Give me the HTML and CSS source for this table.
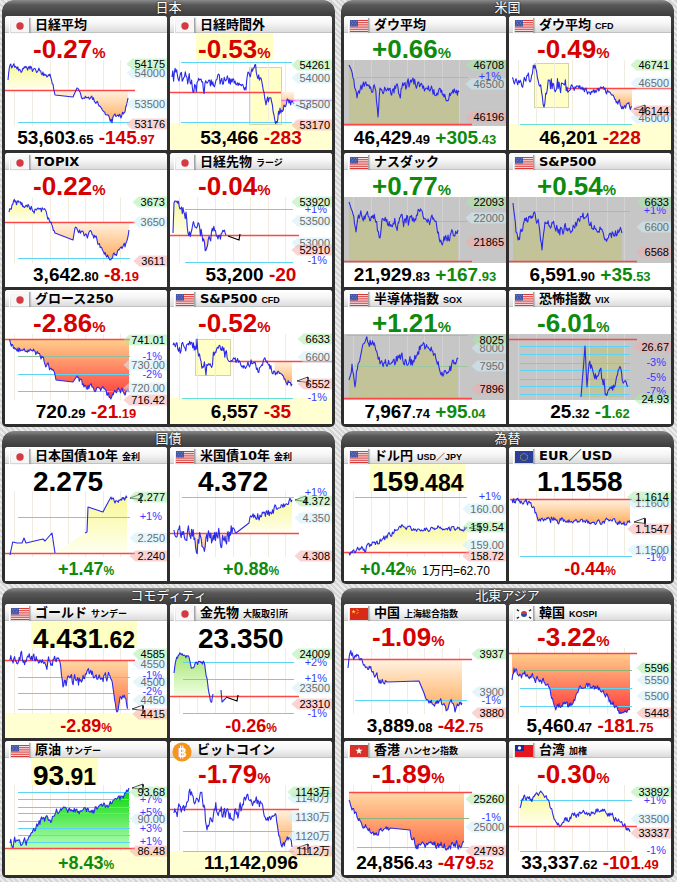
FILE: index.html
```html
<!DOCTYPE html>
<html lang="ja">
<head>
<meta charset="utf-8">
<title>マーケット</title>
<link rel="stylesheet" href="styles.css">
</head>
<body>
<svg class="defs" aria-hidden="true">
  <symbol id="f-jp" viewBox="0 0 18 12"><rect width="18" height="12" fill="#f6f6f6"/><circle cx="9" cy="6" r="3.7" fill="#d43a44"/></symbol>
  <symbol id="f-us" viewBox="0 0 18 12"><rect width="18" height="12" fill="#fff"/><g fill="#d52b2b"><rect y="0" width="18" height="0.93"/><rect y="1.85" width="18" height="0.93"/><rect y="3.7" width="18" height="0.93"/><rect y="5.55" width="18" height="0.93"/><rect y="7.4" width="18" height="0.93"/><rect y="9.25" width="18" height="0.93"/><rect y="11.07" width="18" height="0.93"/></g><rect width="8" height="6.5" fill="#4656a6"/><g fill="#aab4e0"><circle cx="1.5" cy="1.3" r=".45"/><circle cx="4" cy="1.3" r=".45"/><circle cx="6.5" cy="1.3" r=".45"/><circle cx="2.7" cy="3.2" r=".45"/><circle cx="5.3" cy="3.2" r=".45"/><circle cx="1.5" cy="5.1" r=".45"/><circle cx="4" cy="5.1" r=".45"/><circle cx="6.5" cy="5.1" r=".45"/></g></symbol>
  <symbol id="f-eu" viewBox="0 0 18 12"><rect width="18" height="12" fill="#2b3f96"/><g fill="#e8d030"><circle cx="9" cy="2.4" r=".5"/><circle cx="10.8" cy="2.9" r=".5"/><circle cx="12.1" cy="4.2" r=".5"/><circle cx="12.6" cy="6" r=".5"/><circle cx="12.1" cy="7.8" r=".5"/><circle cx="10.8" cy="9.1" r=".5"/><circle cx="9" cy="9.6" r=".5"/><circle cx="7.2" cy="9.1" r=".5"/><circle cx="5.9" cy="7.8" r=".5"/><circle cx="5.4" cy="6" r=".5"/><circle cx="5.9" cy="4.2" r=".5"/><circle cx="7.2" cy="2.9" r=".5"/></g></symbol>
  <symbol id="f-cn" viewBox="0 0 18 12"><rect width="18" height="12" fill="#d82a18"/><polygon points="3.6,1.4 4.2,3 5.9,3 4.5,4 5,5.6 3.6,4.6 2.2,5.6 2.7,4 1.3,3 3,3" fill="#f8d800"/><g fill="#f8d800"><circle cx="7" cy="1.3" r=".5"/><circle cx="8" cy="2.6" r=".5"/><circle cx="8" cy="4.2" r=".5"/><circle cx="7" cy="5.4" r=".5"/></g></symbol>
  <symbol id="f-kr" viewBox="0 0 18 12"><rect width="18" height="12" fill="#fafafa"/><path d="M6,6 a3,3 0 0 1 6,0 z" fill="#d8303c"/><path d="M6,6 a3,3 0 0 0 6,0 z" fill="#2a4aa0"/><g fill="#222"><rect x="1.6" y="1.6" width="2.6" height="1.4" transform="rotate(35 2.9 2.3)"/><rect x="13.8" y="1.6" width="2.6" height="1.4" transform="rotate(-35 15.1 2.3)"/><rect x="1.6" y="9" width="2.6" height="1.4" transform="rotate(-35 2.9 9.7)"/><rect x="13.8" y="9" width="2.6" height="1.4" transform="rotate(35 15.1 9.7)"/></g></symbol>
  <symbol id="f-hk" viewBox="0 0 18 12"><rect width="18" height="12" fill="#d8302a"/><polygon points="9,2.2 9.9,4.8 12.6,4.8 10.4,6.4 11.2,9 9,7.4 6.8,9 7.6,6.4 5.4,4.8 8.1,4.8" fill="#fff"/></symbol>
  <symbol id="f-tw" viewBox="0 0 18 12"><rect width="18" height="12" fill="#e8141c"/><rect width="9" height="6" fill="#1a2a9a"/><circle cx="4.5" cy="3" r="1.7" fill="#fff"/></symbol>
</svg>

<div class="board">

  <section class="sec">
    <div class="sec-h">日本</div>
    <div class="cards">
      <div class="card">
        <div class="ttl"><span class="flag"><svg><use href="#f-jp"/></svg></span><span class="name">日経平均</span></div>
        <div class="pct"><span class="big dn">-0.27<small>%</small></span></div>
        <svg class="chart" data-k="n225"></svg>
        <div class="val">53,603<small>.65</small> <span class="dn">-145<small>.97</small></span></div>
      </div>
      <div class="card">
        <div class="ttl"><span class="flag"><svg><use href="#f-jp"/></svg></span><span class="name">日経時間外</span></div>
        <div class="pct"><span class="big dn hl">-0.53<small>%</small></span></div>
        <svg class="chart" data-k="nkx"></svg>
        <div class="val night">53,466 <span class="dn">-283</span></div>
      </div>
      <div class="card">
        <div class="ttl"><span class="flag"><svg><use href="#f-jp"/></svg></span><span class="name">TOPIX</span></div>
        <div class="pct"><span class="big dn">-0.22<small>%</small></span></div>
        <svg class="chart" data-k="topix"></svg>
        <div class="val">3,642<small>.80</small> <span class="dn">-8<small>.19</small></span></div>
      </div>
      <div class="card">
        <div class="ttl"><span class="flag"><svg><use href="#f-jp"/></svg></span><span class="name">日経先物<span class="sub">ラージ</span></span></div>
        <div class="pct"><span class="big dn">-0.04<small>%</small></span></div>
        <svg class="chart" data-k="nkf"></svg>
        <div class="val">53,200 <span class="dn">-20</span></div>
      </div>
      <div class="card">
        <div class="ttl"><span class="flag"><svg><use href="#f-jp"/></svg></span><span class="name">グロース250</span></div>
        <div class="pct"><span class="big dn">-2.86<small>%</small></span></div>
        <svg class="chart" data-k="growth"></svg>
        <div class="val">720<small>.29</small> <span class="dn">-21<small>.19</small></span></div>
      </div>
      <div class="card">
        <div class="ttl"><span class="flag"><svg><use href="#f-us"/></svg></span><span class="name">S&amp;P500<span class="sub">CFD</span></span></div>
        <div class="pct"><span class="big dn">-0.52<small>%</small></span></div>
        <svg class="chart" data-k="spcfd"></svg>
        <div class="val night">6,557 <span class="dn">-35</span></div>
      </div>
    </div>
  </section>

  <section class="sec">
    <div class="sec-h">米国</div>
    <div class="cards">
      <div class="card">
        <div class="ttl"><span class="flag"><svg><use href="#f-us"/></svg></span><span class="name">ダウ平均</span></div>
        <div class="pct"><span class="big up">+0.66<small>%</small></span></div>
        <svg class="chart" data-k="dow"></svg>
        <div class="val">46,429<small>.49</small> <span class="up">+305<small>.43</small></span></div>
      </div>
      <div class="card">
        <div class="ttl"><span class="flag"><svg><use href="#f-us"/></svg></span><span class="name">ダウ平均<span class="sub">CFD</span></span></div>
        <div class="pct"><span class="big dn">-0.49<small>%</small></span></div>
        <svg class="chart" data-k="dowcfd"></svg>
        <div class="val night">46,201 <span class="dn">-228</span></div>
      </div>
      <div class="card">
        <div class="ttl"><span class="flag"><svg><use href="#f-us"/></svg></span><span class="name">ナスダック</span></div>
        <div class="pct"><span class="big up">+0.77<small>%</small></span></div>
        <svg class="chart" data-k="nasdaq"></svg>
        <div class="val">21,929<small>.83</small> <span class="up">+167<small>.93</small></span></div>
      </div>
      <div class="card">
        <div class="ttl"><span class="flag"><svg><use href="#f-us"/></svg></span><span class="name">S&amp;P500</span></div>
        <div class="pct"><span class="big up">+0.54<small>%</small></span></div>
        <svg class="chart" data-k="sp"></svg>
        <div class="val">6,591<small>.90</small> <span class="up">+35<small>.53</small></span></div>
      </div>
      <div class="card">
        <div class="ttl"><span class="flag"><svg><use href="#f-us"/></svg></span><span class="name">半導体指数<span class="sub">SOX</span></span></div>
        <div class="pct"><span class="big up">+1.21<small>%</small></span></div>
        <svg class="chart" data-k="sox"></svg>
        <div class="val">7,967<small>.74</small> <span class="up">+95<small>.04</small></span></div>
      </div>
      <div class="card">
        <div class="ttl"><span class="flag"><svg><use href="#f-us"/></svg></span><span class="name">恐怖指数<span class="sub">VIX</span></span></div>
        <div class="pct"><span class="big up">-6.01<small>%</small></span></div>
        <svg class="chart" data-k="vix"></svg>
        <div class="val">25<small>.32</small> <span class="up">-1<small>.62</small></span></div>
      </div>
    </div>
  </section>

  <section class="sec">
    <div class="sec-h">国債</div>
    <div class="cards">
      <div class="card">
        <div class="ttl"><span class="flag"><svg><use href="#f-jp"/></svg></span><span class="name">日本国債10年<span class="sub">金利</span></span></div>
        <div class="pct num"><span class="big">2.275</span></div>
        <svg class="chart" data-k="jgb"></svg>
        <div class="val pc"><span class="up">+1.47<small>%</small></span></div>
      </div>
      <div class="card">
        <div class="ttl"><span class="flag"><svg><use href="#f-us"/></svg></span><span class="name">米国債10年<span class="sub">金利</span></span></div>
        <div class="pct num"><span class="big">4.372</span></div>
        <svg class="chart" data-k="ust"></svg>
        <div class="val pc"><span class="up">+0.88<small>%</small></span></div>
      </div>
    </div>
  </section>

  <section class="sec">
    <div class="sec-h">為替</div>
    <div class="cards">
      <div class="card">
        <div class="ttl"><span class="flag"><svg><use href="#f-us"/></svg></span><span class="name">ドル円<span class="sub">USD／JPY</span></span></div>
        <div class="pct num"><span class="big hl">159<small>.484</small></span></div>
        <svg class="chart" data-k="usdjpy"></svg>
        <div class="val pc"><span class="up">+0.42<small>%</small></span><span class="fxr">1万円=62.70</span></div>
      </div>
      <div class="card">
        <div class="ttl"><span class="flag"><svg><use href="#f-eu"/></svg></span><span class="name">EUR／USD</span></div>
        <div class="pct num"><span class="big">1.1558</span></div>
        <svg class="chart" data-k="eurusd"></svg>
        <div class="val pc"><span class="dn">-0.44<small>%</small></span></div>
      </div>
    </div>
  </section>

  <section class="sec">
    <div class="sec-h">コモディティ</div>
    <div class="cards">
      <div class="card">
        <div class="ttl"><span class="flag"><svg><use href="#f-us"/></svg></span><span class="name">ゴールド<span class="sub">サンデー</span></span></div>
        <div class="pct num"><span class="big hl">4,431<small>.62</small></span></div>
        <svg class="chart" data-k="gold"></svg>
        <div class="val pc night"><span class="dn">-2.89<small>%</small></span></div>
      </div>
      <div class="card">
        <div class="ttl"><span class="flag"><svg><use href="#f-jp"/></svg></span><span class="name">金先物<span class="sub">大阪取引所</span></span></div>
        <div class="pct num"><span class="big">23,350</span></div>
        <svg class="chart" data-k="goldf"></svg>
        <div class="val pc"><span class="dn">-0.26<small>%</small></span></div>
      </div>
      <div class="card">
        <div class="ttl"><span class="flag"><svg><use href="#f-us"/></svg></span><span class="name">原油<span class="sub">サンデー</span></span></div>
        <div class="pct num"><span class="big hl">93<small>.91</small></span></div>
        <svg class="chart" data-k="oil"></svg>
        <div class="val pc night"><span class="up">+8.43<small>%</small></span></div>
      </div>
      <div class="card">
        <div class="ttl"><span class="flag btc"><svg viewBox="0 0 20 20"><circle cx="10" cy="10" r="9.6" fill="#f4951e"/><line x1="8.6" y1="3.6" x2="8.6" y2="16.4" stroke="#fff" stroke-width="1.1"/><line x1="10.8" y1="3.6" x2="10.8" y2="16.4" stroke="#fff" stroke-width="1.1"/><text x="10.4" y="14.6" class="btc-t">B</text></svg></span><span class="name">ビットコイン</span></div>
        <div class="pct"><span class="big dn">-1.79<small>%</small></span></div>
        <svg class="chart" data-k="btc"></svg>
        <div class="val night">11,142,096</div>
      </div>
    </div>
  </section>

  <section class="sec">
    <div class="sec-h">北東アジア</div>
    <div class="cards">
      <div class="card">
        <div class="ttl"><span class="flag"><svg><use href="#f-cn"/></svg></span><span class="name">中国<span class="sub">上海総合指数</span></span></div>
        <div class="pct"><span class="big dn">-1.09<small>%</small></span></div>
        <svg class="chart" data-k="china"></svg>
        <div class="val">3,889<small>.08</small> <span class="dn">-42<small>.75</small></span></div>
      </div>
      <div class="card">
        <div class="ttl"><span class="flag"><svg><use href="#f-kr"/></svg></span><span class="name">韓国<span class="sub">KOSPI</span></span></div>
        <div class="pct"><span class="big dn">-3.22<small>%</small></span></div>
        <svg class="chart" data-k="korea"></svg>
        <div class="val">5,460<small>.47</small> <span class="dn">-181<small>.75</small></span></div>
      </div>
      <div class="card">
        <div class="ttl"><span class="flag"><svg><use href="#f-hk"/></svg></span><span class="name">香港<span class="sub">ハンセン指数</span></span></div>
        <div class="pct"><span class="big dn">-1.89<small>%</small></span></div>
        <svg class="chart" data-k="hk"></svg>
        <div class="val">24,856<small>.43</small> <span class="dn">-479<small>.52</small></span></div>
      </div>
      <div class="card">
        <div class="ttl"><span class="flag"><svg><use href="#f-tw"/></svg></span><span class="name">台湾<span class="sub">加権</span></span></div>
        <div class="pct"><span class="big dn">-0.30<small>%</small></span></div>
        <svg class="chart" data-k="tw"></svg>
        <div class="val">33,337<small>.62</small> <span class="dn">-101<small>.49</small></span></div>
      </div>
    </div>
  </section>

</div>
<script src="app.js"></script>
</body>
</html>
```

FILE: styles.css
```css
* { box-sizing: border-box; margin: 0; padding: 0; }
html, body { width: 677px; height: 882px; overflow: hidden; }
body {
  background: repeating-linear-gradient(45deg, #d5d5d5 0 2px, #ebebeb 2px 4px);
  font-family: "Liberation Sans", "Noto Sans CJK JP", sans-serif;
  color: #000;
}
.defs { display: block; width: 0; height: 0; overflow: hidden; }

.board {
  display: grid;
  grid-template-columns: 333px 333px;
  column-gap: 6px;
  row-gap: 4px;
  padding-left: 2px;
  align-items: start;
}
.sec {
  background: linear-gradient(#8a8a8a 0, #585858 5px, #3e3e3e 15px, #2f2f2f 40px, #2d2d2d 100%);
  border-radius: 12px 12px 5px 5px;
  padding: 0 3px 3px;
}
.sec-h {
  height: 16px;
  line-height: 16px;
  text-align: center;
  color: #fff;
  font-family: "DejaVu Sans", "Noto Sans CJK JP", sans-serif;
  font-size: 13px;
  text-shadow: 0 0 2px #000;
}
.cards { display: grid; grid-template-columns: 1fr 1fr; gap: 3px; }
.card {
  background: #fff;
  height: 134px;
  border-radius: 3px 3px 0 0;
  overflow: hidden;
}

.ttl {
  height: 17px;
  display: flex;
  align-items: flex-start;
  background: linear-gradient(#ffffff 0%, #f6f6f6 45%, #dcdcdc 100%);
  border-bottom: 1px solid #c2c2c2;
}
.flag {
  flex: none;
  width: 21px;
  height: 15px;
  margin: 2px 0 0 4px;
  display: flex;
  align-items: center;
  justify-content: center;
  background: linear-gradient(#fdfdfd, #d6d6d6);
  border-left: 1px solid #fff;
  border-right: 1px solid #a4a4a4;
  box-shadow: 1px 0 1px rgba(0,0,0,.18);
}
.flag svg { width: 18px; height: 12px; display: block; }
.flag.btc {
  width: 20px; height: 20px; margin: 1px 0 0 2px;
  background: none; border: none; box-shadow: none;
  position: relative; z-index: 2;
}
.flag.btc svg { width: 20px; height: 20px; }
.btc-t { font: bold 12px "Liberation Sans", sans-serif; fill: #fff; text-anchor: middle; }
.name {
  margin-left: 5px;
  font-family: "DejaVu Sans", "Noto Sans CJK JP", sans-serif;
  font-weight: bold;
  font-size: 13px;
  line-height: 17px;
  white-space: nowrap;
}
.sub {
  margin-left: 4px;
  font-family: "Liberation Sans", "Noto Sans CJK JP", sans-serif;
  font-size: 9px;
  font-weight: bold;
}

.pct { height: 27px; padding-left: 26px; display: flex; align-items: flex-start; }
.big {
  display: inline-block;
  height: 27px;
  padding: 0 2px;
  font-weight: bold;
  font-size: 26px;
  line-height: 33px;
  white-space: nowrap;
}
.big small { font-size: 15px; line-height: 1; }
.num .big { font-size: 28px; line-height: 36px; }
.num .big small { font-size: 23px; }
.hl { background: #ffffc4; }

.chart {
  display: block;
  width: 162px;
  height: 66px;
  overflow: visible;
  position: relative;
  z-index: 1;
}
.chart text { font-family: "Liberation Sans", "Noto Sans CJK JP", sans-serif; font-size: 11px; }
.lb-h, .lb-l { fill: #000; }
.lb-m { fill: #6c6c6c; }
.lb-p { fill: #3a3aff; }
.lbx-h { fill: #a4eca4; fill-opacity: .5; }
.lbx-l { fill: #f6a8a8; fill-opacity: .5; }
.lbx-m { fill: #cdeff9; fill-opacity: .55; }

.val {
  height: 24px;
  line-height: 24px;
  text-align: center;
  font-weight: bold;
  font-size: 19px;
  white-space: nowrap;
}
.val small { font-size: 13px; line-height: 1; }
.val.pc { font-size: 18px; }
.val.pc small { font-size: 12px; }
.fxr { font-weight: normal; font-size: 12px; margin-left: 6px; color: #000; }
.night { background: #ffffd2; }
.up { color: #0e8a0e; }
.dn { color: #d60000; }
```

FILE: app.js
```js
(function () {
  var NS = 'http://www.w3.org/2000/svg';
  var W = 162, H = 66;
  var GRID = [9, 27, 45, 63, 80, 98, 115];
  var FILL = {
    y: ['#f8f894', '#fffff0'],
    ol: ['#c3c39a', '#c3c39a'],
    G: ['#00d400', '#b4ffb4'],
    lg: ['#a2e470', '#f0ffe2'],
    o: ['#fff3e2', '#ffaa58'],
    r: ['#ffcf8c', '#ff3a3a'],
    or: ['#ffd9a4', '#ff6e42']
  };
  var C = {
    n225: { base: 30, rx: [0, 130], cy: [[62, 13, 125]], up: 'y', dn: 'o',
      pts: [[3,20,1.5],[5,5,2],[12,9,2],[25,9,2],[38,12,2],[45,14,2],[48,24,1.5],[50,35,0],[68,37,0],[72,28,1.5],[78,38,1.5],[86,37,1.5],[95,46,1.5],[102,55,2],[107,63,2],[110,54,2],[116,58,2],[120,52,1.5],[123,38,0]],
      lab: [[13,'54000','m'],[44,'53500','m'],[4,'54175','h'],[64,'53176','l']] },
    nkx: { base: 32, rx: [0, 111], cy: [[2, 11, 122], [62, 11, 122]], mag: [40, 111, 162], box: [79, 7, 32, 57], band: 63, fx: 111, dn: 'o',
      pts: [[2,17,5],[20,22,5],[42,25,4],[55,20,3],[62,22,2],[76,30,2],[78,12,3],[84,8,3],[91,18,2],[94,32,3],[96,45,3],[100,38,3],[104,55,3],[107,63,3],[110,48,3],[114,45,3],[119,43,3],[124,44,0]],
      mk: ['z', 126, 45],
      lab: [[18,'54000','m'],[44,'53500','m'],[5,'54261','h'],[65,'53170','l']] },
    topix: { base: 25, rx: [0, 130], cy: [[61, 13, 125]], up: 'y', dn: 'o',
      pts: [[4,15,2],[10,5,2],[20,10,2],[30,12,2],[38,12,2],[46,25,1.5],[50,36,0],[68,43,0],[70,31,1.5],[80,38,2],[88,38,2],[96,50,2],[105,63,2],[114,53,2],[120,50,1.5],[124,33,0]],
      lab: [[25,'3650','m'],[5,'3673','h'],[64,'3611','l']] },
    nkf: { base: 38, rx: [0, 129], cy: [[12, 15, 123], [65, 15, 123]], up: 'y', dn: 'o',
      pts: [[3,36,0],[4,6,3],[10,12,4],[16,15,3],[18,36,4],[25,30,5],[32,38,4],[36,53,3],[43,34,3],[48,42,3],[52,36,3],[56,38,0]],
      mk: ['z', 58, 39],
      lab: [[24,'53500','m'],[46,'53000','m'],[12,'+1%','p'],[5,'53920','h'],[53,'52910','l'],[63,'-1%','p']] },
    growth: { base: 5, rx: [0, 125], cy: [[22, 13, 125, '#8cc0a0'], [40, 13, 125], [57, 13, 125]], dn: 'r',
      pts: [[4,6,1.5],[10,15,2],[20,17,2],[30,17,2],[36,25,2],[47,36,2],[51,46,0],[68,48,0],[72,42,2],[79,53,2],[87,53,2],[94,54,2],[105,63,2],[114,56,2],[124,57,0]],
      lab: [[31,'730.00','m'],[54,'720.00','m'],[22,'-1%','p'],[40,'-2%','p'],[6,'741.01','h'],[66,'716.42','l']] },
    spcfd: { base: 27, rx: [60, 162], cy: [[64, 12, 123, '#66e0d0']], box: [25, 5, 35, 36], band: 64, fx: 104, dn: 'o',
      pts: [[3,11,4],[15,14,4],[25,12,4],[27,5,5],[36,41,5],[45,18,5],[58,26,2],[70,28,3],[85,28,2],[88,38,2],[94,25,2],[100,35,2],[107,40,2],[115,45,2],[122,50,0]],
      mk: ['t', 127, 47],
      lab: [[23,'6600','m'],[63,'-1%','p'],[5,'6633','h'],[50,'6552','l']] },
    dow: { bg: 'g', base: 64, rx: [0, 128], cy: [[17, 12, 124]], up: 'ol',
      pts: [[5,5,2],[9,18,3],[13,38,3],[17,25,3],[25,25,3],[31,28,3],[34,57,2],[36,28,3],[50,33,4],[65,27,4],[74,22,3],[82,28,3],[93,33,3],[100,37,3],[108,33,3],[115,32,0]],
      lab: [[24,'46500','m'],[16,'+1%','p'],[5,'46708','h'],[57,'46196','l']] },
    dowcfd: { base: 28, rx: [58, 162], cy: [[64, 11, 123, '#66e0d0']], box: [25, 3, 34, 44], band: 64, fx: 96, dn: 'o',
      pts: [[3,18,3],[12,22,4],[21,22,4],[26,5,4],[30,25,6],[35,47,4],[40,20,6],[50,22,5],[58,27,2],[70,28,2],[80,32,2],[86,30,2],[96,28,2],[105,37,2],[115,47,2],[123,47,0]],
      mk: ['t', 125, 49],
      lab: [[23,'46500','m'],[58,'46000','m'],[5,'46741','h'],[51,'46144','l']] },
    nasdaq: { bg: 'g', base: 64, rx: [0, 128], cy: [[24, 10, 123]], up: 'ol',
      pts: [[5,5,2],[9,17,3],[12,35,3],[16,18,3],[25,20,3],[31,22,3],[36,41,2],[38,22,3],[50,27,4],[62,26,4],[70,25,3],[75,13,3],[84,22,3],[92,24,3],[96,45,3],[104,38,3],[114,33,0]],
      lab: [[21,'22000','m'],[5,'22093','h'],[45,'21865','l']] },
    sp: { bg: 'g', base: 64, rx: [0, 128], cy: [[14, 11, 121]], up: 'ol',
      pts: [[4,6,2],[7,35,3],[9,43,3],[15,25,3],[26,16,3],[30,28,2],[33,53,2],[36,25,3],[50,32,4],[65,30,4],[74,16,3],[82,25,3],[91,30,3],[96,43,3],[104,36,3],[113,36,0]],
      lab: [[30,'6600','m'],[13,'+1%','p'],[5,'6633','h'],[55,'6568','l']] },
    sox: { bg: 'g', base: 64, rx: [0, 128], cy: [[1, 2, 124], [32, 10, 124, '#9cc8a0']], up: 'ol',
      pts: [[5,46,3],[8,30,3],[11,53,3],[14,30,3],[19,10,3],[22,5,3],[31,12,3],[36,30,3],[50,25,4],[62,26,4],[70,28,3],[77,11,3],[88,17,3],[98,38,3],[106,32,3],[114,25,0]],
      lab: [[14,'8000','m'],[32,'7950','m'],[6,'8025','h'],[55,'7896','l']] },
    vix: { bg: 'g', base: 5, rx: [0, 128], cy: [[12,11,121],[20,11,121],[29,11,121],[36,11,121],[45,11,121],[52,11,121],[60,11,121]],
      box: [72, 12, 43, 51], boxc: '#c3c39a',
      pts: [[72,63,0],[74,38,1],[76,12,1],[78,53,1],[80,30,3],[88,42,4],[95,45,3],[97,60,2],[103,52,3],[106,52,2],[110,35,3],[115,48,3],[119,52,0]],
      lab: [[28,'-3%','p'],[43,'-5%','p'],[57,'-7%','p'],[13,'26.67','l'],[65,'24.93','h']] },
    jgb: { base: 62, rx: [0, 130], cy: [[26, 13, 125]], up: 'y',
      pts: [[5,64,0],[7.7,51,0],[12,52,0],[17,52,0],[19,47,0],[21,52,0],[38,48,0],[40,50,0],[47,42,0],[50,62,-1],[80,42,0],[82,41,0],[83,16,0],[98,21,0],[100,17,0],[106,6,1.5],[110,12,1.5],[114,9,1.5],[118,8,1.5],[122,7,0]],
      mk: ['t', 125, 7],
      lab: [[25,'+1%','p'],[47,'2.250','m'],[6,'2.277','h'],[65,'2.240','l']] },
    ust: { base: 42, rx: [0, 129], cy: [[6, 12, 124]], up: 'y', dn: 'o',
      pts: [[4,39,5],[20,45,7],[40,47,7],[55,45,6],[62,42,2],[66,42,0],[79,32,0],[80,26,3],[90,24,3],[100,21,3],[109,17,2],[116,13,2],[122,9,0]],
      mk: ['t', 125, 9],
      lab: [[1,'+1%','p'],[27,'4.350','m'],[10,'4.372','h'],[65,'4.308','l']] },
    usdjpy: { base: 61, rx: [0, 125], cy: [[6, 11, 123]], up: 'y',
      pts: [[5,62,2],[12,60,2],[20,58,2],[33,50,2],[43,47,2],[53,39,2],[60,36,1.5],[75,38,1.5],[90,37,1.5],[105,36,1.5],[112,38,1.5],[116,39,1.5],[123,36,0]],
      mk: ['t', 125, 37],
      lab: [[5,'+1%','p'],[18,'160.00','m'],[54,'159.00','m'],[36,'159.54','h'],[65,'158.72','l']] },
    eurusd: { base: 8, rx: [1, 123], cy: [[65, 11, 123]], dn: 'o',
      pts: [[3,9,2],[12,10,2],[21,12,2],[26,22,2],[30,29,2],[40,27,2.5],[48,29,2],[56,30,1.5],[70,31,1.5],[85,31,1.5],[100,30,1.5],[104,28,1.5],[110,33,1.5],[115,31,1.5],[121,32,0]],
      mk: ['t', 125, 31],
      lab: [[12,'1.1600','m'],[59,'1.1500','m'],[66,'-1%','p'],[6,'1.1614','h'],[38,'1.1547','l']] },
    gold: { base: 12, rx: [0, 130], cy: [[29, 13, 125], [45, 13, 125], [61, 13, 125]], band: 65, dn: 'or',
      pts: [[5,12,3],[15,12,4],[25,10,3],[35,12,4],[45,13,3],[55,14,3],[58,39,3],[65,30,4],[75,33,3],[85,24,3],[95,30,3],[105,28,2],[108,40,2],[112,64,2],[115,49,2],[120,50,2],[123,60,0]],
      mk: ['t', 127, 61],
      lab: [[16,'4550','m'],[34,'4500','m'],[52,'4450','m'],[27,'-1%','p'],[43,'-2%','p'],[6,'4585','h'],[66,'4415','l']] },
    goldf: { base: 48, rx: [0, 129], cy: [[14, 13, 124], [31, 13, 124], [65, 13, 124]], up: 'lg',
      pts: [[4,25,1],[6,12,1.5],[9,7,1.5],[19,9,1.5],[22,20,1.5],[26,14,1.5],[34,14,1.5],[37,30,1.5],[39,45,1.5],[41,54,1.5],[43,46,-1],[51,42,0],[52,54,0],[56,50,0]],
      mk: ['z', 56, 49],
      lab: [[40,'23500','m'],[14,'+2%','p'],[30,'+1%','p'],[6,'24009','h'],[56,'23310','l'],[65,'-1%','p']] },
    oil: { base: 63, rx: [0, 130], cy: [[7,13,125],[14,13,125],[22,13,125],[28,13,125],[36,13,125],[43,13,125],[50,13,125],[57,13,125]], band: 65, up: 'G',
      pts: [[5,58,3],[12,55,3],[18,58,3],[22,55,2],[28,45,3],[38,33,2.5],[45,35,2.5],[58,23,2],[62,25,2],[75,26,2],[88,25,2],[102,20,2],[115,15,2],[120,8,1.5],[124,3,0]],
      mk: ['t', 127, 3],
      lab: [[34,'90.00','m'],[14,'+7%','p'],[27,'+5%','p'],[43,'+3%','p'],[56,'+1%','p'],[7,'93.68','h'],[66,'86.48','l']] },
    btc: { base: 24, rx: [0, 129], cy: [[46, 13, 124], [66, 13, 124, '#66e0d0']], band: 66, fx: 106, dn: 'o',
      pts: [[4,28,4],[12,24,4],[16,22,3],[19,7,4],[28,15,5],[34,20,4],[37,45,3],[45,25,5],[60,28,5],[71,26,3],[74,13,3],[84,16,3],[91,18,3],[96,35,2],[106,30,2],[108,45,2],[112,62,2],[118,55,2],[122,62,0]],
      mk: ['t', 127, 63],
      lab: [[13,'1140万','m'],[32,'1130万','m'],[51,'1120万','m'],[7,'1143万','h'],[66,'1112万','l']] },
    china: { base: 11, rx: [0, 128], cy: [[52, 11, 123]], dn: 'o',
      pts: [[4,20,2],[6,5,2],[12,9,2],[16,12,2],[26,20,2],[36,32,2],[43,34,0],[75,33,0],[80,45,2],[85,55,2],[96,52,2.5],[103,62,2],[108,55,2],[111,64,2],[115,57,1.5],[118,55,0]],
      lab: [[44,'3900','m'],[52,'-1%','p'],[6,'3937','h'],[65,'3880','l']] },
    korea: { base: 5, rx: [0, 128], cy: [[22, 11, 123, '#8cb478'], [40, 11, 123], [58, 11, 123]], dn: 'r',
      pts: [[3,32,2],[5,20,2],[10,28,2.5],[15,26,2],[25,30,2],[35,34,2],[41,41,2],[46,59,2],[55,56,2.5],[61,58,2],[68,45,2],[73,40,2],[78,35,2],[83,40,2],[91,42,2],[101,52,2],[108,59,2],[111,64,1],[117,63,1],[121,62,0]],
      lab: [[32,'5550','m'],[48,'5500','m'],[20,'5596','h'],[65,'5448','l']] },
    hk: { base: 7, rx: [5, 128], cy: [[33, 13, 125, '#8cb478'], [62, 13, 125]], dn: 'or',
      pts: [[5,15,2],[8,25,2],[13,32,2],[23,43,2],[33,50,2],[36,45,2],[46,43,0],[66,45,0],[67,52,2],[73,60,2],[90,60,2.5],[105,61,2.5],[115,60,2],[120,57,0]],
      lab: [[42,'25000','m'],[32,'-1%','p'],[14,'25260','h'],[66,'24793','l']] },
    tw: { base: 41, rx: [0, 128], cy: [[15, 11, 123], [66, 11, 123]], up: 'y',
      pts: [[11,23,2],[14,15,2],[22,14,2],[28,8,1.5],[34,9,1.5],[38,14,1.5],[41,22,2],[46,35,2],[50,40,2],[61,32,2],[71,27,2],[80,28,2],[88,27,2],[101,28,2],[111,37,2],[118,43,1.5],[121,47,0]],
      lab: [[34,'33500','m'],[15,'+1%','p'],[65,'-1%','p'],[7,'33892','h'],[48,'33337','l']] }
  };

  function mk(tag, at, parent) {
    var e = document.createElementNS(NS, tag);
    for (var k in at) e.setAttribute(k, at[k]);
    if (parent) parent.appendChild(e);
    return e;
  }
  function rng(seed) {
    var s = seed % 2147483647;
    if (s <= 0) s += 2147483646;
    return function () { s = s * 16807 % 2147483647; return (s - 1) / 2147483646; };
  }
  function clampY(y) { return Math.max(0.5, Math.min(65.5, y)); }
  function trace(pts, seed) {
    var r = rng(seed), segs = [], cur = [], all = [], off = 0;
    var p0 = [pts[0][0], pts[0][1]];
    cur.push(p0); all.push(p0);
    for (var i = 0; i < pts.length - 1; i++) {
      var a = pts[i], b = pts[i + 1], n = a[2] || 0;
      var pb = [b[0], b[1]];
      if (n < 0) { segs.push(cur); cur = [pb]; all.push(pb); continue; }
      if (n === 0) { cur.push(pb); all.push(pb); continue; }
      var dx = b[0] - a[0];
      var steps = Math.max(1, Math.round(Math.abs(dx) / 0.8));
      for (var j = 1; j <= steps; j++) {
        var t = j / steps;
        var x = a[0] + dx * t, y = a[1] + (b[1] - a[1]) * t;
        if (j < steps) { off = off * 0.5 + (r() * 2 - 1) * n * 1.5; y += off; }
        var p = [x, clampY(y)];
        cur.push(p); all.push(p);
      }
    }
    segs.push(cur);
    return { segs: segs, all: all };
  }
  function ps(a) {
    return a.map(function (p) { return p[0].toFixed(1) + ',' + p[1].toFixed(1); }).join(' ');
  }
  function grad(defs, id, y1, y2, cols) {
    var g = mk('linearGradient', { id: id, gradientUnits: 'userSpaceOnUse', x1: 0, y1: y1, x2: 0, y2: y2 }, defs);
    mk('stop', { offset: 0, 'stop-color': cols[0] }, g);
    mk('stop', { offset: 1, 'stop-color': cols[1] }, g);
  }

  function draw(svg, k, c, seed) {
    var defs = mk('defs', {}, svg);
    var gray = c.bg === 'g';
    mk('rect', { x: 0, y: 0, width: W, height: H, fill: gray ? '#c6c6c6' : '#fff' }, svg);
    if (c.band != null) mk('rect', { x: 0, y: c.band, width: W, height: H - c.band, fill: '#ffffd2' }, svg);
    if (c.box) mk('rect', { x: c.box[0] + 0.5, y: c.box[1] + 0.5, width: c.box[2], height: c.box[3],
      fill: c.boxc || '#ffffc6', stroke: c.boxc ? 'none' : '#d4d4a2', 'stroke-width': 1 }, svg);
    GRID.forEach(function (x) {
      mk('line', { x1: x + 0.5, y1: 0, x2: x + 0.5, y2: H, stroke: gray ? '#d2d2d2' : '#f0ede0', 'stroke-width': 1 }, svg);
    });
    var t = trace(c.pts, seed);
    var fx = c.fx || 0;
    var f = t.all.filter(function (p) { return p[0] >= fx; });
    if (f.length > 1 && (c.up || c.dn)) {
      var ys = f.map(function (p) { return p[1]; });
      var poly = ps(f) + ' ' + f[f.length - 1][0].toFixed(1) + ',' + c.base + ' ' + f[0][0].toFixed(1) + ',' + c.base;
      if (c.up && c.base > 0) {
        var minY = Math.min.apply(null, ys);
        grad(defs, k + 'gu', Math.min(minY, c.base - 1), c.base, FILL[c.up]);
        var cu = mk('clipPath', { id: k + 'cu' }, defs);
        mk('rect', { x: 0, y: 0, width: W, height: c.base }, cu);
        mk('polygon', { points: poly, fill: 'url(#' + k + 'gu)', 'clip-path': 'url(#' + k + 'cu)' }, svg);
      }
      if (c.dn && c.base < H) {
        var maxY = Math.max.apply(null, ys);
        grad(defs, k + 'gd', c.base, Math.max(maxY, c.base + 1), FILL[c.dn]);
        var cd = mk('clipPath', { id: k + 'cd' }, defs);
        mk('rect', { x: 0, y: c.base, width: W, height: H - c.base + 4 }, cd);
        mk('polygon', { points: poly, fill: 'url(#' + k + 'gd)', 'clip-path': 'url(#' + k + 'cd)' }, svg);
      }
    }
    (c.cy || []).forEach(function (l) {
      mk('line', { x1: l[1], y1: l[0] + 0.5, x2: l[2], y2: l[0] + 0.5, stroke: l[3] || '#5cd4f6', 'stroke-width': 1.2 }, svg);
    });
    var rx = c.rx || [0, 130];
    mk('line', { x1: rx[0], y1: c.base + 0.5, x2: rx[1], y2: c.base + 0.5, stroke: '#ff4646', 'stroke-width': 1.3 }, svg);
    if (c.mag) mk('line', { x1: c.mag[1], y1: c.mag[0] + 0.5, x2: c.mag[2], y2: c.mag[0] + 0.5, stroke: '#ff66ee', 'stroke-width': 1.3 }, svg);
    t.segs.forEach(function (s) {
      if (s.length > 1) mk('polyline', { points: ps(s), fill: 'none', stroke: '#2a2aea', 'stroke-width': 1.1, 'stroke-linejoin': 'round' }, svg);
    });
    if (c.mk) {
      var mx = c.mk[1], my = c.mk[2];
      if (c.mk[0] === 'z') {
        mk('polyline', { points: mx + ',' + my + ' ' + (mx + 11) + ',' + (my + 4) + ' ' + (mx + 12) + ',' + (my - 2),
          fill: 'none', stroke: '#000', 'stroke-width': 1.2 }, svg);
      } else {
        mk('polygon', { points: mx + ',' + my + ' ' + (mx + 11) + ',' + (my - 4) + ' ' + (mx + 11) + ',' + (my + 1.5),
          fill: 'none', stroke: '#111', 'stroke-width': 0.8 }, svg);
        mk('line', { x1: mx + 11, y1: my - 3.5, x2: mx + 11, y2: my + 5, stroke: '#000', 'stroke-width': 1.6 }, svg);
      }
    }
    (c.lab || []).forEach(function (L) {
      var yc = L[0], txt = L[1], ty = L[2];
      var g = mk('g', {}, svg);
      var x = ty === 'p' ? 157 : 160;
      var tx = mk('text', { x: x, y: yc + 3.8, 'text-anchor': 'end', 'class': 'lb-' + ty }, g);
      tx.textContent = txt;
      if (ty !== 'p') {
        var w = tx.getComputedTextLength() || txt.length * 6;
        var l0 = x - w - 2, tip = l0 - 6;
        var pg = document.createElementNS(NS, 'polygon');
        pg.setAttribute('points', tip + ',' + yc + ' ' + l0 + ',' + (yc - 5.5) + ' ' + W + ',' + (yc - 5.5) + ' ' + W + ',' + (yc + 5.5) + ' ' + l0 + ',' + (yc + 5.5));
        pg.setAttribute('class', 'lbx-' + ty);
        g.insertBefore(pg, tx);
      }
    });
  }

  var list = document.querySelectorAll('svg.chart');
  for (var i = 0; i < list.length; i++) {
    var k = list[i].getAttribute('data-k');
    if (C[k]) draw(list[i], k, C[k], 1234 + i * 7919);
  }
})();
```
